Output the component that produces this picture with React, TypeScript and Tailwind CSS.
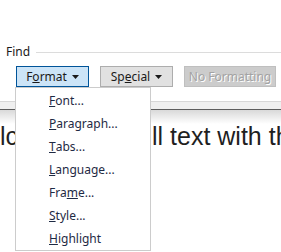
import React from 'react'

const ui = { fontFamily: '"Noto Sans", "Open Sans", sans-serif' }

function Caret() {
  return (
    <svg width="7" height="4" viewBox="0 0 7 4" className="ml-[5px]">
      <path d="M0 0h7L3.5 4z" fill="#1a1a1a" />
    </svg>
  )
}

const items: [string, string, string][] = [
  ['', 'F', 'ont...'],
  ['', 'P', 'aragraph...'],
  ['', 'T', 'abs...'],
  ['', 'L', 'anguage...'],
  ['Fra', 'm', 'e...'],
  ['', 'S', 'tyle...'],
  ['', 'H', 'ighlight'],
]

export default function App() {
  return (
    <div className="relative w-[281px] h-[252px] overflow-hidden bg-white" style={ui}>
      <div className="pt-[44px] pl-[6px] h-[101px]">
        <div className="flex items-center gap-[6px] h-[16px] text-[12px] text-[#1a1a1a]">
          <span>Find</span>
          <div className="flex-1 h-px bg-[#dcdcdc]" />
        </div>
        <div className="flex mt-[6px] ml-[10px] text-[12px] text-[#1a1a1a]">
          <button className="flex items-center justify-center w-[73px] h-[21px] bg-[#cce4f7] border border-[#005499]">
            <span>F<u>o</u>rmat</span>
            <Caret />
          </button>
          <button className="flex items-center justify-center w-[73px] h-[21px] ml-[11px] bg-[#e1e1e1] border border-[#adadad]">
            <span>Sp<u>e</u>cial</span>
            <Caret />
          </button>
          <button className="flex items-center justify-center w-[92px] h-[21px] ml-[11px] bg-[#cccccc] border border-[#bfbfbf] text-[#a3a3a3] [text-shadow:1px_1px_0_#ffffff]">
            No Formatting
          </button>
        </div>
      </div>

      <div className="border-t border-[#d7d7d7] h-[8px] bg-[#efefef]" />
      <div className="h-px bg-[#5c5c5c]" />
      <div className="h-[14px] bg-gradient-to-b from-[#d9d9d9] to-white" />
      <div
        className="flex whitespace-nowrap text-[25px] leading-[30px] text-[#1f1f1f] -mt-[3px]"
        style={{ fontFamily: '"Liberation Sans", Arial, sans-serif' }}
      >
        <span className="w-[152px] shrink-0 overflow-hidden">lc</span>
        <span>ll text with the</span>
      </div>

      <div className="absolute left-[15px] top-[87px] w-[136px] h-[164px] bg-white border border-[#cccccc] pt-px">
        {items.map(([a, u, b]) => (
          <div key={u + b} className="h-[23px] flex items-center pl-[33px] text-[12px] text-[#1e2a44]">
            {a}
            <u>{u}</u>
            {b}
          </div>
        ))}
      </div>
    </div>
  )
}
